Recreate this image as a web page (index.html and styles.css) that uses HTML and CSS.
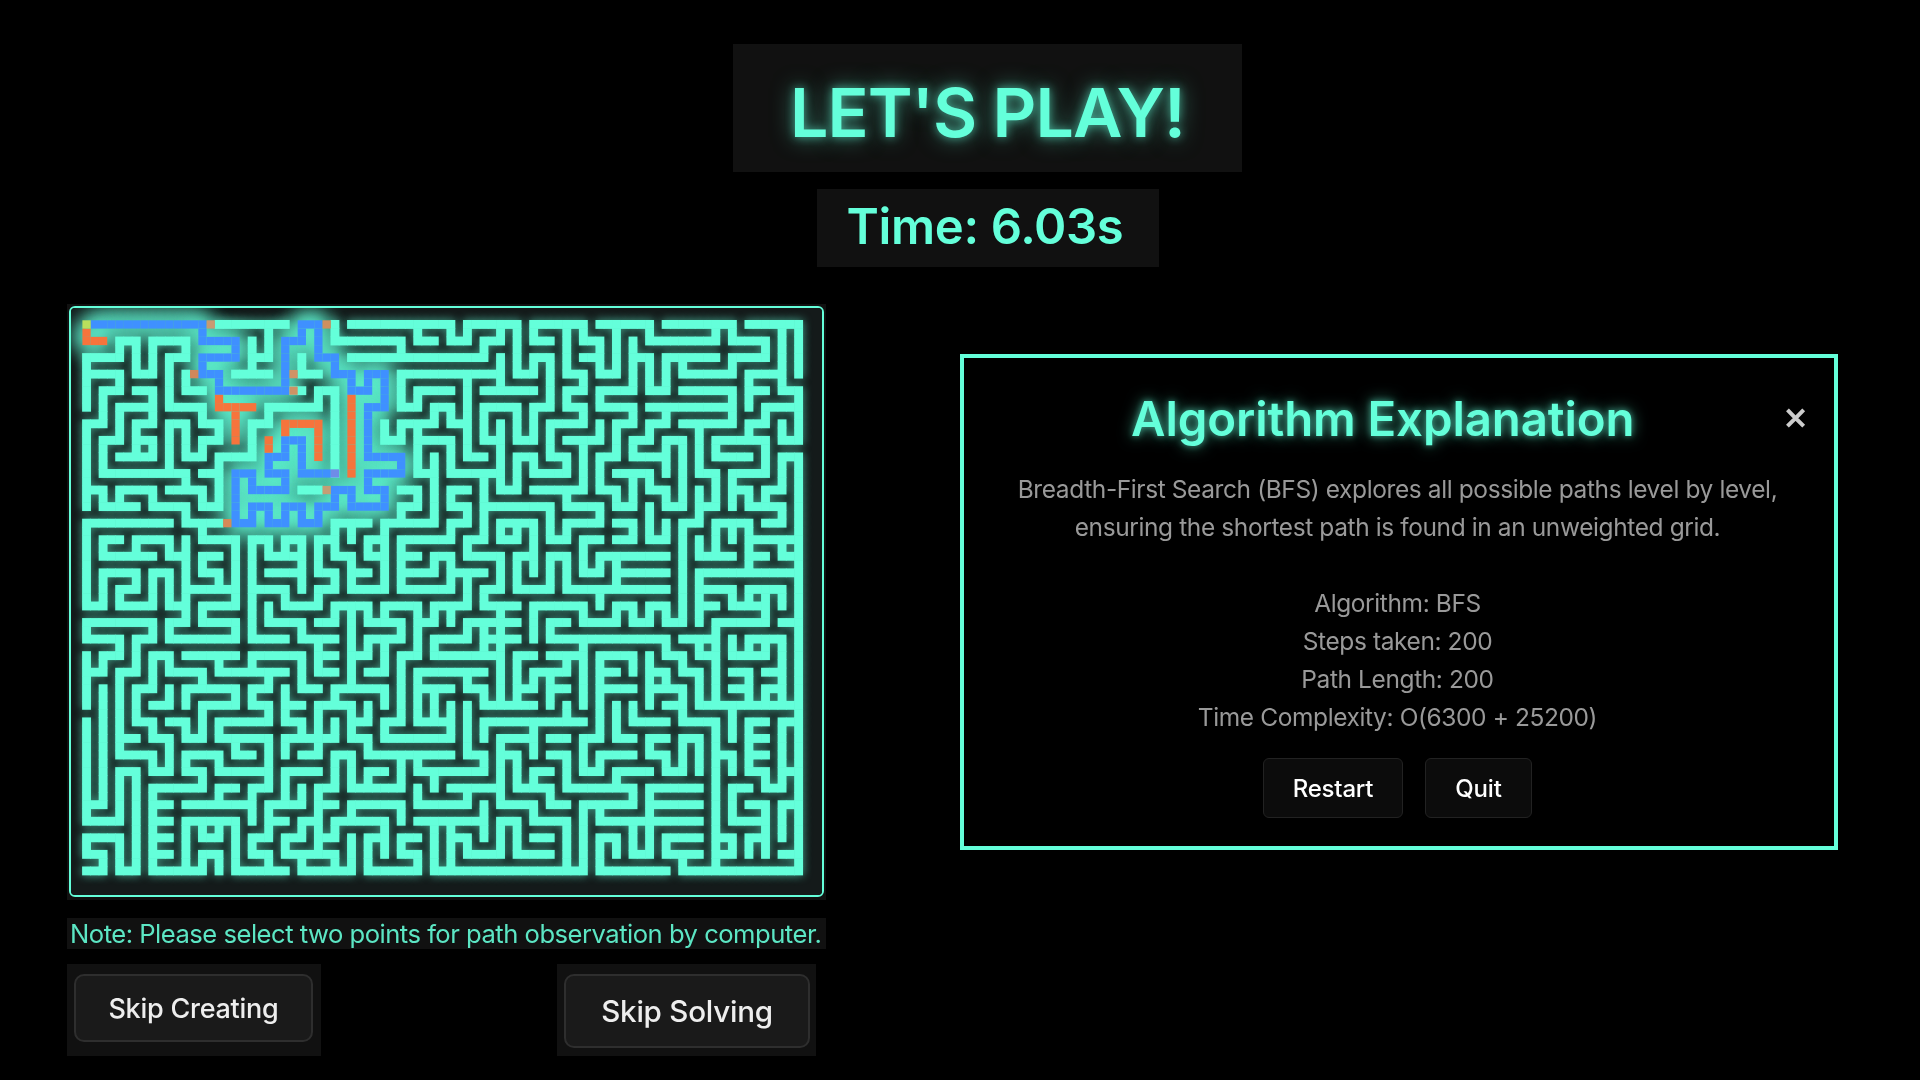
FILE: index.html
```html
<!DOCTYPE html>
<html lang="en">
<head>
<meta charset="utf-8">
<title>Let's Play!</title>
<link rel="stylesheet" href="styles.css">
</head>
<body>
<header class="header">
  <h1 class="title">LET'S PLAY!</h1>
  <div class="timer">Time: 6.03s</div>
</header>
<main class="main">
  <section class="game">
    <div class="maze-wrap">
      <div class="maze-box"><canvas id="maze" class="maze" width="751" height="587"></canvas></div>
    </div>
    <p class="note">Note: Please select two points for path observation by computer.</p>
    <div class="skips">
      <div class="skip-cell"><button class="skip skip-a">Skip Creating</button></div>
      <div class="skip-cell skip-cell-b"><button class="skip skip-b">Skip Solving</button></div>
    </div>
  </section>
  <section class="panel">
    <div class="panel-head">
      <h2 class="panel-title">Algorithm Explanation</h2>
      <span class="close">&#10005;</span>
    </div>
    <p class="panel-text first">Breadth-First Search (BFS) explores all possible paths level by level,<br>ensuring the shortest path is found in an unweighted grid.</p>
    <p class="panel-text stats">Algorithm: BFS<br>Steps taken: 200<br>Path Length: 200<br>Time Complexity: O(6300 + 25200)</p>
    <div class="actions">
      <button class="action action-restart">Restart</button>
      <button class="action action-quit">Quit</button>
    </div>
  </section>
</main>
<script src="script.js"></script>
</body>
</html>
```
FILE: styles.css
```css
* { box-sizing: border-box; }
html, body { margin: 0; height: 100%; }
body {
  background: #000;
  font-family: Inter, "Liberation Sans", sans-serif;
  color: #64ffda;
  overflow: hidden;
}
.header {
  display: flex;
  flex-direction: column;
  align-items: center;
  padding: 44px 0 0 55px;
}
.title {
  margin: 0;
  width: 509px;
  height: 128px;
  padding-top: 8px;
  display: flex;
  align-items: center;
  justify-content: center;
  background: #111;
  font-size: 68px;
  font-weight: 600;
  letter-spacing: -0.9px;
  text-shadow: 0 0 10px rgba(100, 255, 218, .55), 0 0 22px rgba(100, 255, 218, .5);
}
.timer {
  margin-top: 17px;
  width: 342px;
  height: 78px;
  padding: 0 5px 3px 0;
  display: flex;
  align-items: center;
  justify-content: center;
  background: #111;
  font-size: 49px;
  font-weight: 600;
  letter-spacing: -0.35px;
}
.main {
  display: flex;
  align-items: flex-start;
  gap: 134px;
  padding: 37px 0 0 67px;
}
.game { width: 759px; flex: none; }
.maze-wrap { background: #111; padding: 2px; height: 596px; }
.maze-box {
  width: 755px;
  height: 591px;
  border: 2px solid #64ffda;
  border-radius: 6px;
  overflow: hidden;
  background: #111;
}
.maze { display: block; }
.note {
  margin: 18px 0 0;
  height: 31px;
  background: #111;
  padding-left: 3px;
  font-size: 25.6px;
  line-height: 31px;
  letter-spacing: -0.5px;
  white-space: nowrap;
  color: #5ce6c4;
}
.skips {
  display: flex;
  justify-content: space-between;
  margin-top: 15px;
  padding-right: 10px;
}
.skip-cell {
  height: 92px;
  background: #111;
  display: flex;
  padding: 10px 8px 6px 7px;
  align-items: flex-start;
}
.skip-cell-b { padding-right: 6px; }
.skip {
  font-family: inherit;
  font-weight: 500;
  color: #eee;
  background: #1a1a1a;
  border: 2px solid #2e2e2e;
  border-radius: 10px;
}
.skip-a { width: 239px; height: 68px; font-size: 27px; letter-spacing: -0.25px; }
.skip-b { width: 246px; height: 74px; font-size: 29.6px; letter-spacing: -0.25px; }
.panel {
  width: 878px;
  height: 496px;
  margin-top: 50px;
  flex: none;
  background: #000;
  border: 4px solid #64ffda;
  padding: 0 27px 0 36px;
  display: flex;
  flex-direction: column;
  align-items: center;
}
.panel-head {
  display: flex;
  align-items: center;
  justify-content: space-between;
  width: 100%;
  height: 76px;
  margin-top: 22px;
  padding-left: 131px;
}
.panel-title {
  margin: 0;
  font-size: 47.4px;
  font-weight: 600;
  letter-spacing: -0.1px;
  text-shadow: 0 0 6px rgba(100, 255, 218, .5), 0 0 15px rgba(100, 255, 218, .6);
}
.close { font-size: 30px; font-weight: 800; color: #ccc; margin-right: -1px; }
.panel-text {
  margin: 0;
  text-align: center;
  font-size: 24.5px;
  line-height: 38px;
  letter-spacing: -0.4px;
  color: #999;
}
.first { margin-top: 14px; padding-right: 12px; }
.stats { margin-top: 38px; padding-right: 12px; }
.actions { display: flex; gap: 22px; margin-top: 22px; padding-right: 12px; }
.action {
  height: 60px;
  font-family: inherit;
  font-size: 24px;
  font-weight: 500;
  letter-spacing: -0.2px;
  color: #fff;
  background: #0c0c0c;
  border: 1px solid #222;
  border-radius: 6px;
}
.action-restart { width: 140px; }
.action-quit { width: 107px; }
```
FILE: script.js
```js
(function () {
  var canvas = document.getElementById('maze');
  var ctx = canvas.getContext('2d');
  var CELL = 8.28, OX = 11.4, OY = 12.3, COLS = 87, ROWS = 67;
  var GREEN = '#64ffda', BLUE = '#3f90ff', ORANGE = '#f6743c';

  // Corridors: H holds [row, fromCol, toCol], V holds [col, fromRow, toRow].
  var H = [[0,16,24],[0,30,30],[0,32,44],[2,30,38],[2,4,6],[2,8,12],[4,0,4],[4,10,12],[4,20,22],[4,32,38],
    [6,0,4],[6,6,8],[6,18,22],[6,26,28],[6,38,40],[8,2,4],[8,6,8],[8,12,14],[8,26,26],[8,28,30],[10,4,8],
    [10,10,14],[10,22,28],[10,38,40],[12,0,2],[12,6,8],[12,10,12],[12,14,16],[12,20,22],[12,38,40],[14,2,4],
    [14,6,8],[14,14,16],[14,36,38],[16,4,8],[16,12,14],[16,16,20],[18,2,12],[18,14,16],[20,0,2],[20,4,8],
    [20,10,14],[20,26,28],[20,38,40],[22,2,6],[22,8,12],[22,14,16],[24,0,10],[24,12,14],[24,30,34],[24,36,40],
    [0,46,52],[0,54,60],[0,62,68],[0,70,78],[0,80,86],
    [2,40,42],[2,44,46],[2,48,50],[2,54,56],[2,60,62],[2,68,76],[2,78,82],
    [4,38,48],[4,54,56],[4,60,62],[4,66,68],[4,70,76],[4,78,82],
    [6,38,50],[6,52,54],[6,58,60],[6,62,64],[6,72,78],[6,80,84],
    [8,40,44],[8,48,54],[8,58,60],[8,62,66],[8,68,70],[8,72,78],[8,80,82],[8,84,86],
    [10,42,44],[10,48,52],[10,54,56],[10,58,60],[10,62,66],[10,68,78],[10,82,86],
    [12,40,42],[12,44,46],[12,56,60],[12,64,66],[12,68,70],[12,72,78],[12,80,82],
    [14,40,44],[14,48,50],[14,52,54],[14,58,62],[14,66,68],[14,70,72],[14,76,82],[14,84,86],
    [16,46,48],[16,52,54],[16,56,58],[16,62,64],[16,66,70],[16,76,80],[16,84,86],
    [18,40,42],[18,44,50],[18,54,58],[18,64,68],[18,74,76],[18,78,82],
    [20,44,46],[20,50,52],[20,54,60],[20,62,64],[20,68,70],[20,78,80],[20,82,84],
    [22,38,40],[22,44,46],[22,48,56],[22,58,62],[22,64,66],[22,70,72],[22,74,76],[22,80,84],
    [24,38,42],[24,44,46],[24,50,54],[24,58,62],[24,64,66],[24,72,74],[24,76,80],[24,82,84],
    [26,38,44],[26,46,48],[26,50,52],[26,56,58],[26,60,62],[26,64,66],[26,68,70],[26,80,86],
    [26,2,4],[26,6,10],[26,14,18],[28,2,8],[28,10,12],[28,14,16],[30,14,16],[32,12,18],[34,4,8],[32,4,6],[30,2,6],
    [34,0,2],[30,8,10],[34,10,12],[36,10,12],[38,10,18],[36,14,18],[34,14,18],
    [36,0,8],[38,6,8],[38,0,4],[40,2,4],[42,4,6],[42,0,2],
    [26,20,22],[28,22,26],[26,24,26],[30,22,26],[32,20,24],[34,24,28],[32,28,30],[30,28,30],[26,28,30],[28,30,32],
    [32,32,36],[28,34,36],[26,34,36],[30,32,34],
    [32,38,44],[30,38,42],[28,42,44],[36,22,26],[38,26,30],[42,28,30],[36,28,30],[34,30,34],[36,34,38],[34,36,40],
    [38,34,38],[40,32,34],[42,34,36],[44,30,36],[40,38,40],[46,28,32],
    [38,42,44],[40,42,44],[42,40,44],[44,40,44],[34,42,44],[36,40,42],
    [40,8,10],[42,10,14],[40,12,18],[44,12,18],[46,14,18],[44,6,8],[46,8,10],[42,16,22],[40,20,26],[42,22,24],
    [44,20,22],[44,26,28],[46,20,22],
    [58,0,2],[60,0,4],[54,4,6],[66,4,6],[62,0,4],[64,0,2],[66,0,2],
    [52,4,8],[54,8,10],[50,8,10],[48,6,8],[50,4,6],[48,10,12],[50,12,14],[48,16,22],[50,16,22],[56,20,22],[54,16,22],
    [52,12,16],[54,12,14],[56,8,14],[58,8,10],[62,8,10],[64,8,10],[66,8,14],[52,18,20],[58,12,20],[56,16,18],
    [60,12,18],[66,18,24],[62,14,16],[62,20,22],[64,20,22],[64,14,16],[60,22,24],[58,22,26],[62,24,26],[64,24,28],
    [66,26,32],[64,28,30],[62,28,30],[60,26,28],[60,30,36],[58,32,38],[60,34,36],[60,40,44],[62,38,40],[64,38,40],
    [66,34,40],[62,34,36],[66,42,44],
    [48,24,26],[50,24,26],[50,26,30],[52,26,28],[54,24,28],[52,30,32],[56,28,30],[56,32,36],[54,34,36],[48,32,34],
    [50,32,34],[52,34,40],[56,36,38],[48,36,38],[50,36,44],[48,40,44],[52,40,44],[54,40,42],[54,42,44],[58,40,44],
    [28,46,50],[32,48,50],[34,48,50],[26,50,52],[28,52,54],[32,52,56],[28,56,58],[32,58,64],[26,60,62],[28,62,64],[30,60,62],
    [34,54,60],[36,60,64],[34,64,66],[36,66,68],[34,68,70],[36,70,72],[40,52,54],[36,56,58],[38,56,70],[40,70,72],
    [42,72,74],[40,56,60],[42,54,58],[44,56,58],[44,52,54],[46,48,52],[40,48,50],[42,44,46],[44,46,48],[36,46,50],
    [38,48,50],[38,44,46],[40,44,48],[30,44,48],[34,44,46],
    [28,74,76],[30,74,86],[32,74,78],[34,78,82],[34,74,76],[32,80,84],[36,76,82],[38,72,76],[40,78,82],[38,80,84],
    [36,84,86],[28,80,82],[28,84,86],
    [40,62,66],[42,68,70],[44,68,72],[40,74,76],[46,76,82],[44,78,80],[42,78,80],[42,82,84],[44,82,84],
    [52,46,48],[54,44,48],[48,48,58],[46,52,54],[50,50,54],[50,56,58],[52,50,52],[56,52,56],[58,56,58],[54,54,56],
    [52,56,58],[56,58,66],[58,62,66],[50,60,62],[54,60,62],[52,62,66],[50,64,66],[48,66,70],[54,64,68],
    [50,68,70],[52,68,70],[54,70,72],[50,72,74],[56,68,74],[60,66,70],[48,72,76],[46,70,72],[46,74,76],[62,76,78],
    [64,76,78],[52,76,78],[48,80,82],[52,80,82],[54,80,82],[56,78,80],[60,78,82],[58,80,82],[62,80,82],[58,84,86],
    [64,84,86],[54,84,86],[48,84,86],[46,82,86],[56,82,84],
    [66,44,60],[58,60,62],[60,62,66],[66,62,70],[62,62,64],[64,66,68],[60,68,72],[62,70,74],[64,70,74],[66,72,86],
    [56,44,50],[58,44,46],[58,50,54],[60,54,58],[60,44,48],[60,50,52],[62,54,56],[64,52,56],[64,46,50],[62,44,46]];
  var V = [[0,4,10],[0,12,22],[0,24,26],[2,8,12],[2,14,18],[2,20,22],[4,2,4],[4,6,8],[4,10,14],[4,20,22],
    [6,2,6],[6,12,16],[8,2,6],[8,8,12],[8,14,16],[8,20,22],[10,4,10],[10,12,18],[12,2,4],[12,6,8],[12,12,16],
    [12,18,20],[12,22,24],[14,10,12],[14,14,16],[14,20,22],[14,24,26],[16,12,14],[16,16,22],[20,2,6],[20,12,16],
    [22,0,4],[22,10,12],[26,4,6],[28,8,10],[30,0,2],[30,8,18],[30,24,26],[32,24,26],[36,12,14],[36,24,26],
    [38,2,4],[38,6,10],[38,12,14],[38,22,24],[40,0,2],
    [44,0,2],[46,0,2],[50,0,2],[48,2,4],[52,0,6],[54,0,2],[58,0,6],[60,0,2],[62,2,6],[64,0,6],[68,0,2],[76,0,2],
    [78,0,2],[82,2,4],[78,4,6],[72,4,6],[70,4,8],[66,2,8],[68,4,8],[62,8,10],[66,10,12],[64,12,16],[62,16,20],[64,20,22],
    [50,4,8],[46,6,16],[40,8,10],[42,10,12],[44,10,12],[40,12,18],[44,14,18],[48,18,26],[42,16,24],[40,20,22],
    [44,20,22],[46,22,24],[44,24,26],
    [48,10,14],[50,12,20],[52,16,20],[54,16,18],[58,16,18],[56,12,16],[60,10,12],[58,8,10],[60,6,8],[52,10,14],
    [54,10,14],[56,4,10],[54,4,6],
    [62,12,14],[60,14,20],[58,20,22],[62,22,24],[56,22,26],[58,24,26],[50,24,26],[52,24,26],[54,24,26],
    [78,8,12],[70,10,12],[68,12,14],[66,14,16],[70,14,18],[72,14,22],[70,20,22],[68,18,20],[66,18,22],[74,12,18],
    [76,18,22],[74,20,24],[72,24,26],
    [76,14,16],[82,14,18],[78,18,22],[80,20,22],[84,22,24],[80,12,14],[82,10,12],[86,8,14],[84,12,14],[84,6,8],
    [80,6,10],[86,0,6],[84,0,6],[86,16,26],[84,16,20],[82,20,22],[76,24,26],[78,24,26],[80,24,26],[68,22,26],
    [70,24,26],[66,24,26],[74,26,27],
    [2,26,28],[6,26,28],[10,26,28],[12,26,34],[18,26,34],[14,28,30],[16,30,32],[4,32,34],[6,30,32],[2,30,34],[0,26,34],
    [8,30,34],[10,30,34],[12,34,36],[10,36,38],[18,36,38],[14,34,36],
    [8,36,38],[6,38,42],[0,36,38],[4,38,40],[2,40,42],[4,42,46],[0,40,46],[2,44,46],
    [20,26,38],[22,26,28],[24,26,28],[26,26,32],[24,32,34],[28,32,34],[30,30,32],[28,26,30],[30,24,28],[32,28,32],
    [36,26,32],[34,26,28],[32,24,26],
    [38,26,32],[42,28,30],[22,34,36],[26,36,38],[28,38,42],[32,34,42],[30,34,36],[34,34,36],[40,34,40],[36,34,36],
    [38,36,38],[34,38,40],[32,40,44],[36,38,42],[38,40,46],[36,44,46],[30,44,46],
    [42,38,40],[40,42,46],[42,44,46],[42,34,36],
    [8,40,44],[10,40,42],[14,42,44],[12,44,46],[18,44,46],[6,44,46],[10,44,46],[16,40,42],[20,40,42],[26,40,44],
    [22,42,44],[20,44,46],[24,44,46],
    [0,48,60],[2,46,58],[4,54,60],[6,54,66],[4,62,66],[0,62,64],[2,64,66],
    [4,46,52],[8,52,54],[10,50,54],[8,48,50],[6,46,48],[12,48,50],[14,46,50],[22,46,48],[16,48,50],[22,50,56],[20,56,60],
    [16,52,54],[12,52,54],[14,54,56],[8,56,66],[18,50,52],[16,56,58],[12,60,66],[14,60,62],[16,60,62],[18,60,66],
    [20,62,64],[22,64,66],[14,64,66],[16,64,66],
    [22,58,62],[26,56,58],[24,62,64],[26,64,66],[32,62,66],[30,64,66],[28,62,64],[28,60,62],[26,60,62],[30,60,62],
    [32,58,60],[38,58,60],[36,60,64],[38,62,64],[40,64,66],[34,62,66],[42,60,66],[44,60,66],
    [24,46,48],[26,48,50],[24,50,52],[28,46,50],[30,48,50],[28,50,52],[24,54,58],[30,52,56],[28,56,60],[32,52,56],
    [34,54,56],[32,46,50],[34,46,48],[34,50,52],[38,52,56],[36,48,50],[38,46,48],[40,46,48],[42,46,48],[40,52,54],
    [42,54,56],[40,56,58],
    [46,26,28],[50,28,32],[48,32,34],[50,34,46],[52,28,32],[54,26,28],[56,28,32],[58,28,32],[62,32,34],[64,28,32],
    [62,28,30],[60,26,30],[54,28,30],
    [60,34,36],[64,34,36],[66,34,36],[68,34,36],[70,34,36],[72,26,36],[54,34,38],[52,40,44],[56,36,38],[70,38,40],
    [72,40,42],[74,42,46],[60,38,46],[58,40,42],[56,42,46],[54,42,44],[52,44,46],[48,44,46],[48,36,40],[46,42,44],
    [46,36,38],[46,30,34],[44,34,36],[44,28,32],
    [74,26,28],[76,26,28],[74,30,36],[78,32,34],[82,32,36],[84,32,34],[80,32,34],[76,36,38],[78,38,40],[82,38,40],
    [80,38,40],[84,38,46],[86,26,66],[80,26,30],[84,26,28],
    [62,40,46],[66,40,42],[68,40,46],[70,42,44],[72,44,46],[74,38,40],[76,38,46],[80,42,46],[82,44,46],
    [46,46,52],[48,52,54],[44,46,50],[58,46,48],[48,48,50],[50,50,54],[54,48,50],[54,50,52],[52,52,56],[56,56,58],
    [54,54,56],[58,52,56],[66,56,58],[60,50,54],[62,46,50],[62,52,54],[64,46,50],[66,46,48],[64,54,56],
    [68,50,52],[70,52,54],[72,50,54],[74,50,54],[68,56,60],[76,48,64],[72,46,48],[78,62,64],[76,64,66],[78,52,54],
    [78,46,50],[80,48,54],[78,56,60],[82,58,64],[80,62,64],[84,58,62],[84,48,54],[82,54,56],[84,54,56],
    [60,58,66],[62,58,60],[66,60,64],[62,62,66],[64,62,64],[68,58,64],[70,62,64],[72,64,66],
    [46,56,58],[50,54,58],[54,58,60],[58,60,66],[48,58,62],[50,60,64],[52,60,64],[46,62,64],[44,62,66]];

  // The search drawn over the maze.
  var BH = [[0,1,14],[2,14,18],[4,14,18],[6,14,16],[8,16,24],[2,24,26],[0,26,28],[4,28,30],[6,30,32],[8,32,34],
    [6,34,36],[10,34,36],[16,34,38],[18,34,38],[20,34,36],[22,32,36],[20,30,32],[22,28,30],[24,26,28],[22,24,26],
    [24,22,24],[22,20,22],[24,18,20],[18,18,20],[20,20,24],[18,22,24],[16,22,24],[14,24,26],[18,26,29]];
  var BV = [[14,0,2],[18,2,4],[14,4,6],[16,6,8],[24,2,8],[26,0,2],[28,0,4],[30,4,6],[32,6,8],[34,6,8],[36,6,10],
    [34,10,16],[38,16,18],[34,18,20],[36,20,22],[32,20,22],[30,20,22],[28,22,24],[26,22,24],[24,22,24],[22,22,24],
    [20,22,24],[18,18,24],[20,18,20],[24,18,20],[22,16,18],[24,14,16],[26,14,18]];
  var OH = [[2,0,2],[10,16,20],[12,24,28]];
  var OV = [[0,1,2],[16,9,10],[18,10,14],[24,12,13],[28,12,16],[22,14,15],[32,9,18]];
  var SPECIAL = [[15,0,'#c89a72'],[29,0,'#cf8f60'],[13,6,'#d0875a'],[25,6,'#cf9265'],[25,8,'#cf9265'],
    [29,20,'#c49d74'],[17,24,'#d58a58'],[0,0,'#b9e05c'],[30,18,'#6f8ce8']];

  var key = function (c, r) { return c + ',' + r; };
  function fillRuns(map, hs, vs) {
    hs.forEach(function (s) { for (var c = s[1]; c <= s[2]; c++) map[key(c, s[0])] = 1; });
    vs.forEach(function (s) { for (var r = s[1]; r <= s[2]; r++) map[key(s[0], r)] = 1; });
  }
  var green = {}, blue = {}, orange = {};
  fillRuns(green, H, V);
  green[key(25, 8)] = 1; green[key(26, 8)] = 1;
  fillRuns(blue, BH, BV);
  fillRuns(orange, OH, OV);

  // Every maze node is a corridor: a node not yet reached joins its neighbour.
  for (var c = 0; c < COLS; c += 2) for (var r = 0; r < ROWS; r += 2) {
    var k = key(c, r);
    if (green[k] || blue[k] || orange[k] || (c === 0 && r === 0)) continue;
    green[k] = 1;
    green[key(c > 0 ? c - 1 : c + 1, r)] = 1;
  }

  function each(map, fn) {
    Object.keys(map).forEach(function (k) { var p = k.split(','); fn(+p[0], +p[1]); });
  }
  function rect(c, r, grow) {
    ctx.fillRect(OX + c * CELL - grow, OY + r * CELL - grow, CELL + 2 * grow, CELL + 2 * grow);
  }

  ctx.fillStyle = '#141a1a';
  ctx.fillRect(0, 0, canvas.width, canvas.height);

  // Soft glow of the whole maze, which lifts the gaps to a dark teal.
  ctx.save();
  ctx.filter = 'blur(5px)';
  ctx.globalAlpha = 0.72;
  ctx.fillStyle = GREEN;
  each(green, function (c, r) { rect(c, r, 0); });
  ctx.restore();

  // Brighter glow around the cells the search has visited.
  ctx.save();
  ctx.filter = 'blur(10px)';
  ctx.globalAlpha = 0.85;
  ctx.fillStyle = GREEN;
  each(blue, function (c, r) { rect(c, r, 5); });
  each(orange, function (c, r) { rect(c, r, 5); });
  ctx.restore();

  ctx.fillStyle = GREEN;
  each(green, function (c, r) { rect(c, r, 0.3); });
  ctx.fillStyle = BLUE;
  each(blue, function (c, r) { rect(c, r, 0); });
  ctx.fillStyle = ORANGE;
  each(orange, function (c, r) { rect(c, r, 0); });
  SPECIAL.forEach(function (s) { ctx.fillStyle = s[2]; rect(s[0], s[1], 0); });
})();
```
